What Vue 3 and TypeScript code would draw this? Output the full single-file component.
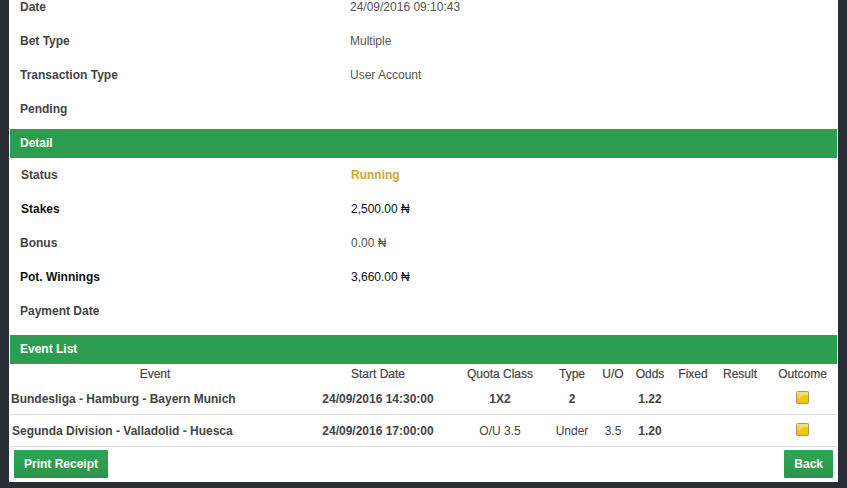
<template>
  <div class="page">
    <div class="panel">
      <div class="rows summary">
        <div v-for="row in summary" :key="row.label" class="row">
          <span class="label">{{ row.label }}</span>
          <span class="value">{{ row.value }}</span>
        </div>
      </div>

      <div class="bar">Detail</div>
      <div class="rows detail">
        <div class="row inset">
          <span class="label">Status</span>
          <span class="value running">Running</span>
        </div>
        <div class="row inset strong">
          <span class="label">Stakes</span>
          <span class="value">2,500.00 ₦</span>
        </div>
        <div class="row">
          <span class="label">Bonus</span>
          <span class="value shifted">0.00 ₦</span>
        </div>
        <div class="row strong">
          <span class="label">Pot. Winnings</span>
          <span class="value shifted">3,660.00 ₦</span>
        </div>
        <div class="row">
          <span class="label">Payment Date</span>
          <span class="value shifted"></span>
        </div>
      </div>

      <div class="bar">Event List</div>
      <table class="events">
        <thead>
          <tr>
            <th v-for="col in columns" :key="col">{{ col }}</th>
          </tr>
        </thead>
        <tbody>
          <tr v-for="ev in events" :key="ev.name">
            <td class="name" :class="{ second: ev.regular }">{{ ev.name }}</td>
            <td class="date">{{ ev.start }}</td>
            <td :class="{ heavy: !ev.regular }">{{ ev.quota }}</td>
            <td :class="{ heavy: !ev.regular }">{{ ev.type }}</td>
            <td>{{ ev.uo }}</td>
            <td class="heavy">{{ ev.odds }}</td>
            <td></td>
            <td></td>
            <td>
              <svg class="outcome" viewBox="0 0 13 13" width="13" height="13">
                <defs>
                  <linearGradient id="outcomeFill" x1="0" y1="0" x2="0" y2="1">
                    <stop offset="0" stop-color="#f4e58c" />
                    <stop offset="1" stop-color="#e2b20c" />
                  </linearGradient>
                </defs>
                <rect x="0.5" y="0.5" width="12" height="12" rx="1" fill="url(#outcomeFill)" stroke="#a99a5c" />
                <path d="M3 9 L7 4.5 Q10 3.5 12 5 L12 12 L3 12 Z" fill="#f2c40f" />
              </svg>
            </td>
          </tr>
        </tbody>
      </table>

      <div class="actions">
        <button class="btn">Print Receipt</button>
        <button class="btn">Back</button>
      </div>
    </div>
  </div>
</template>

<script setup lang="ts">
const summary = [
  { label: 'Date', value: '24/09/2016 09:10:43' },
  { label: 'Bet Type', value: 'Multiple' },
  { label: 'Transaction Type', value: 'User Account' },
  { label: 'Pending', value: '' },
];

const columns = ['Event', 'Start Date', 'Quota Class', 'Type', 'U/O', 'Odds', 'Fixed', 'Result', 'Outcome'];

const events = [
  { name: 'Bundesliga - Hamburg - Bayern Munich', start: '24/09/2016 14:30:00', quota: '1X2', type: '2', uo: '', odds: '1.22', regular: false },
  { name: 'Segunda Division - Valladolid - Huesca', start: '24/09/2016 17:00:00', quota: 'O/U 3.5', type: 'Under', uo: '3.5', odds: '1.20', regular: true },
];
</script>

<style>
html, body {
  margin: 0;
  height: 100%;
  overflow: hidden;
  background: #2a2e37;
}
</style>

<style scoped>
.page {
  height: 488px;
  padding: 0 9px;
  box-sizing: border-box;
  background: #2a2e37;
  font-family: "Liberation Sans", Arial, sans-serif;
  font-size: 12px;
  color: #444;
  overflow: hidden;
}
.panel {
  width: 829px;
  height: 482px;
  padding: 0 1px;
  box-sizing: border-box;
  background: #fff;
}
.summary { margin-top: 0; height: 129px; }
.summary .row:first-child { height: 24px; align-items: flex-start; line-height: 14px; }
.row {
  display: flex;
  align-items: center;
  height: 34px;
  padding-left: 10px;
}
.summary .row:nth-child(n+2) { position: relative; top: 0; }
.label {
  width: 330px;
  font-weight: 700;
}
.value { color: #555; }
.inset { padding-left: 11px; }
.inset .label { width: 330px; }
.shifted { margin-left: 1px; }
.running { color: #c6a92c; font-weight: 700; }
.strong .label, .strong .value { color: #111; }
.detail { height: 177px; }
.bar {
  height: 29px;
  line-height: 28px;
  padding-left: 10px;
  background: #2c9d4f;
  color: #fff;
  font-weight: 700;
}
.events {
  width: 827px;
  border-collapse: collapse;
  table-layout: fixed;
}
.events th, .events td {
  padding: 0;
  text-align: center;
  overflow: visible;
  white-space: nowrap;
}
.events th {
  height: 19px;
  font-weight: 400;
  -webkit-text-stroke: 0.2px #444;
}
.events td {
  height: 31px;
  border-bottom: 1px solid #ddd;
  color: #444;
}
.events th:nth-child(1) { width: 290px; }
.events th:nth-child(2) { width: 156px; }
.events th:nth-child(3) { width: 88px; }
.events th:nth-child(4) { width: 56px; }
.events th:nth-child(5) { width: 26px; }
.events th:nth-child(6) { width: 48px; }
.events th:nth-child(7) { width: 38px; }
.events th:nth-child(8) { width: 56px; }
.events th:nth-child(9) { width: 69px; }
.events td.name {
  text-align: left;
  padding-left: 1px;
  font-weight: 700;
}
.events td.name.second { padding-left: 2px; }
.events td.date, .events td.heavy { font-weight: 700; }
.outcome { display: block; margin: 0 auto 3px; }
.actions {
  display: flex;
  justify-content: space-between;
  padding: 3px 4px 0;
}
.btn {
  height: 28px;
  padding: 0 10px;
  border: none;
  border-radius: 1px;
  background: linear-gradient(#2fa554, #2a964b);
  color: #fff;
  font: 700 12px "Liberation Sans", Arial, sans-serif;
}
</style>
